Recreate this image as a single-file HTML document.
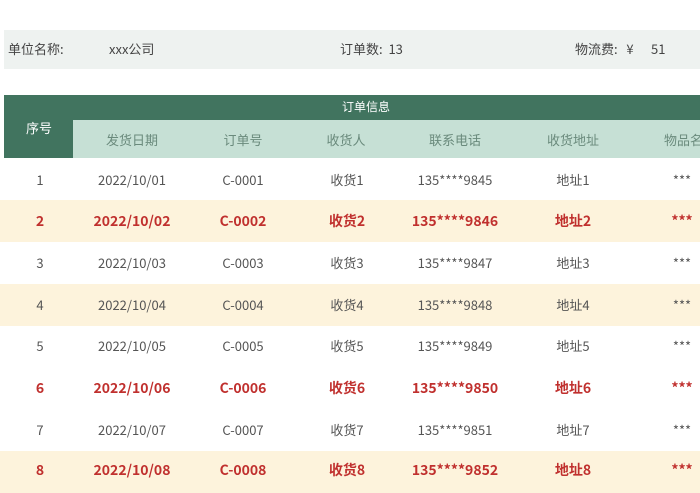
<!DOCTYPE html>
<html><head><meta charset="utf-8"><style>
*{margin:0;padding:0;box-sizing:border-box}
body{width:700px;height:470px;background:#fff;position:relative;overflow:hidden;font-family:"Noto Sans CJK SC","Liberation Sans",sans-serif;color:#555;font-size:13px;line-height:18px}
.a{position:absolute;white-space:nowrap}
.c{position:absolute;transform:translateX(-50%);white-space:nowrap;line-height:18px}
.info{position:absolute;left:4px;top:30px;width:700px;height:39px;background:#eef2f0}
.row{position:absolute;left:0;width:700px;height:42px}
.y{background:#fdf3dc}
.r{color:#c0302e;font-weight:bold}
</style></head><body>
<div class="info"></div>
<div class="a" style="left:8px;top:40px;color:#444">单位名称:</div>
<div class="a" style="left:109px;top:40px;color:#444">xxx公司</div>
<div class="a" style="left:340px;top:40px;color:#444">订单数:&nbsp; 13</div>
<div class="a" style="left:575px;top:40px;color:#444">物流费:&nbsp;&nbsp; ¥&nbsp;&nbsp;&nbsp;&nbsp;&nbsp; 51</div>

<div class="a" style="left:4px;top:95px;width:696px;height:25px;background:#41745f"></div>
<div class="a" style="left:4px;top:95px;width:69px;height:63px;background:#41745f"></div>
<div class="a" style="left:73px;top:120px;width:627px;height:38px;background:#c6e0d5"></div>
<div class="c" style="left:366px;top:98px;color:#fff;font-size:12px">订单信息</div>
<div class="c" style="left:39px;top:119px;color:#fff">序号</div>
<div class="c" style="left:132px;top:131px;color:#6a8a7c">发货日期</div>
<div class="c" style="left:243px;top:131px;color:#6a8a7c">订单号</div>
<div class="c" style="left:346px;top:131px;color:#6a8a7c">收货人</div>
<div class="c" style="left:455px;top:131px;color:#6a8a7c">联系电话</div>
<div class="c" style="left:573px;top:131px;color:#6a8a7c">收货地址</div>
<div class="c" style="left:690px;top:131px;color:#6a8a7c">物品名称</div>

<div class="row" style="top:158px"></div>
<div class="row y" style="top:200px"></div>
<div class="row" style="top:242px"></div>
<div class="row y" style="top:284px"></div>
<div class="row" style="top:325px"></div>
<div class="row" style="top:367px"></div>
<div class="row" style="top:409px"></div>
<div class="row y" style="top:451px"></div>

<div style="position:absolute;left:0;top:171px;width:700px">
<div class="c" style="left:40px">1</div><div class="c" style="left:132px">2022/10/01</div><div class="c" style="left:243px">C-0001</div><div class="c" style="left:347px">收货1</div><div class="c" style="left:455px">135****9845</div><div class="c" style="left:573px">地址1</div><div class="c" style="left:682px">***</div>
</div>
<div class="r" style="position:absolute;left:0;top:212px;width:700px;font-size:14px">
<div class="c" style="left:40px">2</div><div class="c" style="left:132px">2022/10/02</div><div class="c" style="left:243px">C-0002</div><div class="c" style="left:347px">收货2</div><div class="c" style="left:455px">135****9846</div><div class="c" style="left:573px">地址2</div><div class="c" style="left:682px">***</div>
</div>
<div style="position:absolute;left:0;top:254px;width:700px">
<div class="c" style="left:40px">3</div><div class="c" style="left:132px">2022/10/03</div><div class="c" style="left:243px">C-0003</div><div class="c" style="left:347px">收货3</div><div class="c" style="left:455px">135****9847</div><div class="c" style="left:573px">地址3</div><div class="c" style="left:682px">***</div>
</div>
<div style="position:absolute;left:0;top:296px;width:700px">
<div class="c" style="left:40px">4</div><div class="c" style="left:132px">2022/10/04</div><div class="c" style="left:243px">C-0004</div><div class="c" style="left:347px">收货4</div><div class="c" style="left:455px">135****9848</div><div class="c" style="left:573px">地址4</div><div class="c" style="left:682px">***</div>
</div>
<div style="position:absolute;left:0;top:337px;width:700px">
<div class="c" style="left:40px">5</div><div class="c" style="left:132px">2022/10/05</div><div class="c" style="left:243px">C-0005</div><div class="c" style="left:347px">收货5</div><div class="c" style="left:455px">135****9849</div><div class="c" style="left:573px">地址5</div><div class="c" style="left:682px">***</div>
</div>
<div class="r" style="position:absolute;left:0;top:379px;width:700px;font-size:14px">
<div class="c" style="left:40px">6</div><div class="c" style="left:132px">2022/10/06</div><div class="c" style="left:243px">C-0006</div><div class="c" style="left:347px">收货6</div><div class="c" style="left:455px">135****9850</div><div class="c" style="left:573px">地址6</div><div class="c" style="left:682px">***</div>
</div>
<div style="position:absolute;left:0;top:421px;width:700px">
<div class="c" style="left:40px">7</div><div class="c" style="left:132px">2022/10/07</div><div class="c" style="left:243px">C-0007</div><div class="c" style="left:347px">收货7</div><div class="c" style="left:455px">135****9851</div><div class="c" style="left:573px">地址7</div><div class="c" style="left:682px">***</div>
</div>
<div class="r" style="position:absolute;left:0;top:461px;width:700px;font-size:14px">
<div class="c" style="left:40px">8</div><div class="c" style="left:132px">2022/10/08</div><div class="c" style="left:243px">C-0008</div><div class="c" style="left:347px">收货8</div><div class="c" style="left:455px">135****9852</div><div class="c" style="left:573px">地址8</div><div class="c" style="left:682px">***</div>
</div>
</body></html>
